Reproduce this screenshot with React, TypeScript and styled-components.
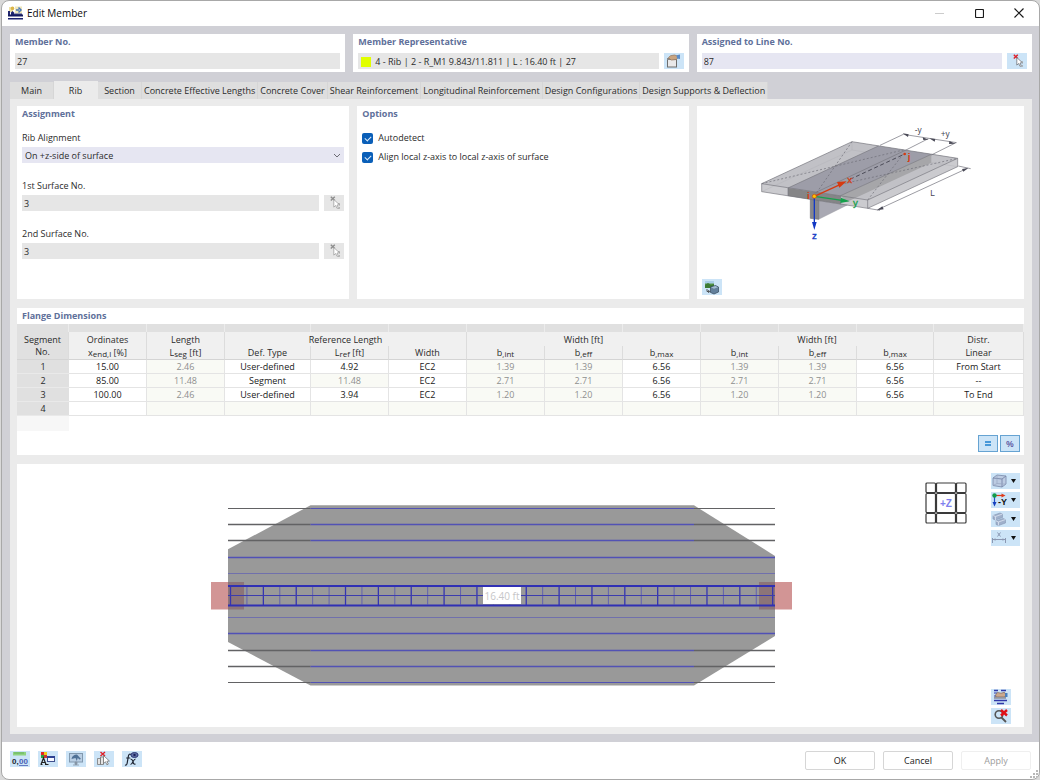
import React from "react";
import styled, { createGlobalStyle } from "styled-components";

const GlobalStyle = createGlobalStyle`
  * { box-sizing: border-box; }
  body {
    margin: 0;
    background: #d9d9d9;
    color: #2b2b2b;
    font-family: "Open Sans", "Noto Sans", sans-serif;
    font-size: 9px;
    line-height: 12px;
  }
  button, input, select { font: inherit; color: inherit; }
`;

/* ---------- window frame ---------- */

const Window = styled.div`
  display: flex;
  flex-direction: column;
  min-height: 100vh;
  margin-left: 1px;
  border: 1px solid #a8a8a8;
  border-radius: 8px;
  background: #ffffff;
  overflow: hidden;
`;

const TitleBar = styled.header`
  display: flex;
  align-items: center;
  height: 25px;
  padding: 0 0 1px 6px;
  gap: 4px;
`;

const WindowTitle = styled.h1`
  flex: 1;
  margin: 0;
  font-size: 10px;
  font-weight: 400;
  color: #0c0c0c;
`;

const WindowButtons = styled.div`
  display: flex;
`;

const WindowButton = styled.button`
  display: flex;
  align-items: center;
  justify-content: center;
  width: 40px;
  height: 24px;
  padding: 0;
  border: 0;
  background: transparent;
`;

const Body = styled.main`
  display: flex;
  flex: 1;
  flex-direction: column;
  padding: 8px 7px 8px 8px;
  background: #d0d0d6;
`;

const HeaderPanels = styled.div`
  display: grid;
  grid-template-columns: repeat(3, 1fr);
  gap: 8px;
  margin-bottom: 9px;
`;

const HeaderPanel = styled.section`
  display: flex;
  flex-direction: column;
  gap: 5px;
  padding: 2px 5px 3px;
  background: #ffffff;
`;

const PanelTitle = styled.h2`
  margin: 0;
  font-size: 9px;
  font-weight: 700;
  line-height: 12px;
  color: #60709a;
`;

const ControlRow = styled.div`
  display: flex;
  gap: 5px;
`;

const TextField = styled.input<{ $editable?: boolean }>`
  flex: 1;
  min-width: 0;
  height: 16px;
  padding: 1px 2px 0;
  border: 0;
  outline: 0;
  background: ${(p) => (p.$editable ? "#e6e6f2" : "#e6e6e6")};
`;

const Representative = styled.div`
  display: flex;
  flex: 1;
  align-items: center;
  gap: 4px;
  height: 16px;
  padding: 1px 3px 0;
  background: #e6e6e6;
`;

const Swatch = styled.span`
  width: 10px;
  height: 10px;
  background: #e1ff00;
`;

const IconButton = styled.button<{ $muted?: boolean; $menu?: boolean }>`
  display: flex;
  flex: none;
  align-items: center;
  justify-content: ${(p) => (p.$menu ? "space-between" : "center")};
  width: ${(p) => (p.$menu ? "29px" : "20px")};
  height: 16px;
  padding: ${(p) => (p.$menu ? "0 4px 0 0" : "0")};
  border: 0;
  background: ${(p) => (p.$muted ? "#e6e6e6" : "#cce4f7")};
`;

/* ---------- tabs ---------- */

const TabList = styled.nav`
  display: flex;
  align-items: flex-end;
  height: 18px;
`;

const Tab = styled.button<{ $active?: boolean }>`
  height: ${(p) => (p.$active ? "18px" : "17px")};
  min-width: 44px;
  padding: 1px 2px 0;
  border: 0;
  border-right: 1px solid ${(p) => (p.$active ? "#ebebeb" : "#d6d6d6")};
  background: ${(p) => (p.$active ? "#ebebeb" : "#dedede")};
  white-space: nowrap;
`;

const TabPage = styled.div`
  display: flex;
  flex: 1;
  flex-direction: column;
  gap: 9px;
  padding: 7px 8px 7px 7px;
  background: #ebebeb;
`;

const TopPanels = styled.div`
  display: grid;
  grid-template-columns: 332fr 331fr 327fr;
  gap: 8px;
`;

const Panel = styled.section`
  display: flex;
  flex-direction: column;
  min-height: 193px;
  padding: 2px 5px 4px;
  background: #ffffff;
`;

const FieldList = styled.div`
  display: flex;
  flex-direction: column;
  gap: 17px;
  padding-top: 12px;
`;

const Field = styled.div`
  display: flex;
  flex-direction: column;
  gap: 3px;
`;

const SelectBox = styled.div`
  position: relative;
  display: flex;

  svg {
    position: absolute;
    top: 6px;
    right: 3px;
    pointer-events: none;
  }
`;

const Select = styled.select`
  width: 100%;
  height: 16px;
  padding: 1px 3px 0;
  border: 0;
  border-radius: 0;
  appearance: none;
  background: #e6e6f2;
`;

const CheckList = styled.div`
  display: flex;
  flex-direction: column;
  gap: 7px;
  padding-top: 12px;
`;

const CheckLabel = styled.label`
  display: flex;
  align-items: center;
  gap: 5px;
`;

const CheckBox = styled.input`
  display: flex;
  justify-content: center;
  width: 11px;
  height: 11px;
  margin: 0;
  border-radius: 2px;
  appearance: none;
  background: #0a5fb8;

  &:checked::after {
    content: "";
    width: 5px;
    height: 3px;
    margin-top: 3px;
    border: solid #dcebfa;
    border-width: 0 0 1px 1px;
    transform: rotate(-45deg);
  }
`;

const PreviewPanel = styled(Panel)`
  justify-content: space-between;
  padding-top: 20px;
`;

const RibFigure = styled.svg`
  align-self: center;
  margin-left: 12px;
`;

/* ---------- flange table ---------- */

const TablePanel = styled.section`
  display: flex;
  flex-direction: column;
  background: #ffffff;

  > h2 { padding: 2px 5px; }
`;

const Table = styled.table`
  width: 100%;
  border-collapse: separate;
  border-spacing: 0;
  table-layout: fixed;
`;

const StripCell = styled.td`
  height: 8px;
  padding: 0;
  border-right: 1px solid #ececec;
  background: #e0e0e0;
`;

const HeadCell = styled.th<{ $bottom?: boolean; $corner?: boolean }>`
  height: 14px;
  padding: 1px 0 0;
  border-right: 1px solid #dcdcdc;
  border-bottom: ${(p) => (p.$bottom ? "1px solid #d4d4d4" : "0")};
  background: ${(p) => (p.$corner ? "#e0e0e0" : "#f0f0f0")};
  font-weight: 400;
  line-height: 12px;

  sub { font-size: 8px; line-height: 8px; vertical-align: -1px; }
`;

const RowHead = styled.th`
  height: 14px;
  padding: 1px 0 0;
  border-bottom: 1px solid #e9e9e9;
  background: #e0e0e0;
  font-weight: 400;
`;

const Cell = styled.td<{ $locked?: boolean }>`
  height: 14px;
  padding: 1px 0 0;
  border-right: 1px solid #e4e4e4;
  border-bottom: 1px solid #e4e4e4;
  background: ${(p) => (p.$locked ? "#f9faf5" : "#ffffff")};
  color: ${(p) => (p.$locked ? "#8f8f8f" : "#202020")};
  text-align: center;
`;

const StubCell = styled.td`
  height: 15px;
  padding: 0;
  background: #f7f7f7;
`;

const TableTools = styled.div`
  display: flex;
  justify-content: flex-end;
  gap: 2px;
  padding: 4px 4px 3px;
`;

const ToggleButton = styled.button`
  display: flex;
  align-items: center;
  justify-content: center;
  width: 20px;
  height: 17px;
  padding: 0;
  border: 1px solid #66a3d2;
  background: #cce4f7;
  color: #5a55a0;
  font-weight: 600;
`;

/* ---------- graphic ---------- */

const Canvas = styled.section`
  position: relative;
  display: flex;
  flex: 1;
  min-height: 263px;
  padding: 9px 4px 3px 0;
  background: #ffffff;
`;

const PlanArea = styled.div`
  display: flex;
  flex: 1;
  align-items: center;
  justify-content: center;
  min-width: 0;
  padding: 0 6px 8px 0;
`;

const ViewCube = styled.svg`
  position: absolute;
  top: 18px;
  right: 57px;
`;

const CanvasTools = styled.div`
  display: flex;
  flex-direction: column;
  gap: 3px;
`;

const Spacer = styled.div`
  flex: 1;
`;

/* ---------- footer ---------- */

const Footer = styled.footer`
  position: relative;
  display: flex;
  align-items: flex-start;
  gap: 8px;
  height: 37px;
  padding: 9px 8px 0;
`;

const PushButton = styled.button`
  width: 70px;
  height: 19px;
  padding: 1px 0 0;
  border: 1px solid #d6d6d6;
  border-radius: 2px;
  background: #ffffff;
  color: #202020;

  &:disabled { border-color: #efefef; color: #9c9c9c; }
`;

const Grip = styled.svg`
  position: absolute;
  right: 1px;
  bottom: 1px;
`;

/* ---------- icons ---------- */

const AppIcon = () => (
  <svg width="15" height="14" viewBox="0 0 15 14" aria-hidden="true">
    <path d="M1 1h4v5H1z" fill="#efe2a4" />
    <circle cx="4.500" cy="2.400" r="1.800" fill="#dcb548" />
    <path d="M0 5h2v4H0z" fill="#23286e" />
    <path d="M3 9V6.500l1.500-1.500 1.500 1.500V9z" fill="#1d2470" />
    <path d="M7 0.500h7v7H7z" fill="#efe7bb" />
    <path d="M8 4h3M10.500 1.500L13 4l-2.500 2.500" fill="none" stroke="#4a78b8" strokeWidth="1.500" />
    <path d="M6 7.500h8v1.500H6z" fill="#39407c" />
    <rect x="0" y="8.500" width="15" height="2" fill="#141a62" />
    <rect x="0" y="12" width="15" height="1.500" fill="#1b2270" />
  </svg>
);

const PickIcon = ({ active }: { active?: boolean }) => (
  <svg width="20" height="16" viewBox="0 0 20 16" aria-hidden="true">
    <path d="M6.800 1.800l4 3.800M10.800 1.800l-4 3.800" stroke={active ? "#e02028" : "#8e8e8e"} strokeWidth="1.400" />
    <path
      d="M9.800 4.500v7.600l1.900-1.600 1.300 2.900 1.300-.6-1.300-2.800 2.400-.3z"
      fill="#ffffff"
      stroke={active ? "#70757c" : "#a0a0a0"}
      strokeWidth=".8"
    />
    <path d="M14 8.500h1.500v2M14 13.500h1.500V12" fill="none" stroke="#9c9c9c" strokeWidth=".7" />
  </svg>
);

const HandWindowIcon = () => (
  <svg width="20" height="16" viewBox="0 0 20 16" aria-hidden="true">
    <rect x="3.500" y="5.500" width="9" height="8.500" fill="#e9e9ea" stroke="#6d6d6d" />
    <path d="M3 5h10v2H3z" fill="#8a8a8a" />
    <path d="M4.500 4.500l2-1.800 4-.7 3 1 .5 1.500-1.500 2-5 .6L5.500 6z" fill="#c9a480" stroke="#86684f" strokeWidth=".6" />
    <path d="M12.500 2.200l3.500-.8V6l-3-.6z" fill="#5a8cc8" />
  </svg>
);

const GalleryIcon = () => (
  <svg width="20" height="16" viewBox="0 0 20 16" aria-hidden="true">
    <rect x="3" y="2" width="9" height="7" fill="#5b9a4c" />
    <path d="M3 2h9v2.500H3z" fill="#a8cde8" />
    <path d="M3 6l3-2 3 2 3-1v4H3z" fill="#3c7b34" />
    <path d="M8.500 8l5-1.500 3 1.500v5l-4.500 2-3.500-1.500z" fill="#63809c" stroke="#33475c" strokeWidth=".7" />
    <path d="M9 8.300l4.500-1.300 2.500 1.200-4 1.600z" fill="#a4bdd4" />
    <path d="M5 10v2.500h2.500M6.200 11l1.500 1.500L6.200 14" fill="none" stroke="#333333" strokeWidth=".8" />
  </svg>
);

const CubeIcon = () => (
  <svg width="16" height="16" viewBox="0 0 16 16" aria-hidden="true">
    <path d="M2 5l4-3 9 1v8l-4 3-9-1.500z" fill="#bccbe2" stroke="#8191b0" strokeWidth=".9" />
    <path d="M2 5l9 1 4-3M11 6v8" fill="none" stroke="#7887a8" strokeWidth=".9" />
    <path d="M6 2v8.500l-4 2M6 10.500l9 .7" fill="none" stroke="#98a6c2" strokeWidth=".7" />
  </svg>
);

const AxesIcon = () => (
  <svg width="16" height="16" viewBox="0 0 16 16" aria-hidden="true">
    <path d="M3.500 4v7" stroke="#2350c8" strokeWidth="1.200" />
    <path d="M1.500 10h4l-2 4.500z" fill="#1540c0" />
    <path d="M4 3.500h7" stroke="#e03a18" strokeWidth="1.200" />
    <path d="M10.500 1.500v4l4-2z" fill="#e03a18" />
    <circle cx="3.500" cy="3.500" r="2.200" fill="#119c4c" />
    <text x="7" y="13" fontSize="9" fontWeight="700" fill="#111111" fontFamily="Liberation Sans, sans-serif">-Y</text>
  </svg>
);

const LayersIcon = () => (
  <svg width="16" height="16" viewBox="0 0 16 16" aria-hidden="true">
    <path d="M2 4.500l7-2.500 2.500 1v3.500L4.500 9 2 8z" fill="#9fb0cb" stroke="#8595b2" strokeWidth=".6" />
    <path d="M2 4.500l2.500 1 7-2.500M4.500 5.500V9" fill="none" stroke="#dde5f2" strokeWidth=".8" />
    <path d="M5 10l7-2.500 2.500 1V12l-7 2.500L5 13.500z" fill="#9fb0cb" stroke="#8595b2" strokeWidth=".6" />
    <path d="M5 10l2.500 1 7-2.500M7.500 11v3.500" fill="none" stroke="#dde5f2" strokeWidth=".8" />
  </svg>
);

const DimensionIcon = () => (
  <svg width="16" height="16" viewBox="0 0 16 16" aria-hidden="true">
    <path d="M1.500 8v5M14.500 8v5M2 9.500h12" fill="none" stroke="#8b98b2" />
    <path d="M2 9.500l2.500-1.300v2.600zM14 9.500l-2.500-1.300v2.600z" fill="#8b98b2" />
    <path d="M6.500 2.500l3 4M9.500 2.500l-3 4" stroke="#8290ac" strokeWidth=".9" />
  </svg>
);

const Caret = () => (
  <svg width="5" height="4" viewBox="0 0 5 4" aria-hidden="true">
    <path d="M0 0h5L2.500 4z" fill="#111111" />
  </svg>
);

const PrintIcon = () => (
  <svg width="20" height="16" viewBox="0 0 20 16" aria-hidden="true">
    <path d="M3 1.500h4M10 1.500h5M3 11.500h13M6 14.500h7" stroke="#3038a8" strokeWidth="1.300" />
    <path d="M3 4h3M3 7h2" stroke="#3038a8" strokeWidth="1.100" />
    <path d="M4.500 6l2-2.500 3.500.7 3.500-.9 1.500 2.700-1 2H5z" fill="#cba98e" stroke="#7a6253" strokeWidth=".7" />
    <path d="M3 8h12v1.800H3z" fill="#9094a0" />
    <path d="M14 4h2.500v4H14z" fill="#4880bf" />
  </svg>
);

const ZoomResetIcon = () => (
  <svg width="20" height="16" viewBox="0 0 20 16" aria-hidden="true">
    <circle cx="8" cy="6.500" r="3.800" fill="none" stroke="#555555" strokeWidth="1.600" />
    <path d="M10.500 9.500l4.500 4.500" stroke="#555555" strokeWidth="1.800" />
    <path d="M10 2l6 5.500M16 2l-6 5.500" stroke="#e01018" strokeWidth="2.400" />
  </svg>
);

const UnitsIcon = () => (
  <svg width="20" height="16" viewBox="0 0 20 16" aria-hidden="true">
    <path d="M3 1h13v3.500H3z" fill="#8fd37f" />
    <path d="M5 1v2M7 1v2M9 1v2M11 1v2M13 1v2" stroke="#4c9c44" strokeWidth=".6" />
    <text x="2" y="13" fontSize="8" fontWeight="700" fill="#23262c" fontFamily="Liberation Sans, sans-serif">0,</text>
    <text x="9" y="13" fontSize="8" fontWeight="700" fill="#4a5eb4" fontFamily="Liberation Sans, sans-serif">00</text>
    <path d="M9 14.500h9" stroke="#4a5eb4" strokeWidth=".8" />
  </svg>
);

const DisplayIcon = () => (
  <svg width="20" height="16" viewBox="0 0 20 16" aria-hidden="true">
    <path d="M3 1h3v3H3z" fill="#e52222" />
    <path d="M6 1h3v3H6z" fill="#f1c916" />
    <path d="M3 4h3v3H3z" fill="#2ea33c" />
    <path d="M6 4h3v3H6z" fill="#c93434" />
    <path d="M3 13.500l2.500-6.500L8 13.500M4 11.500h3M2.500 13.500h2M7 13.500h3.500" fill="none" stroke="#222222" strokeWidth="1.200" />
    <rect x="9.500" y="5.500" width="7" height="5" fill="#f7f8ff" stroke="#40508e" />
    <path d="M9 5h8v2H9z" fill="#2d4192" />
  </svg>
);

const MonitorIcon = () => (
  <svg width="20" height="16" viewBox="0 0 20 16" aria-hidden="true">
    <rect x="3.500" y="2.500" width="13" height="8.500" fill="#b9cee3" stroke="#8198ae" />
    <path d="M5.500 8c.5-3 2.500-4.500 5.500-4.500L15 8l-1.800.4-1.400-1.600-1 3.200-1.300-3z" fill="#4f7196" />
    <path d="M9 11h2v2.500H9zM7 14h6" fill="#8796a6" stroke="#8796a6" strokeWidth=".8" />
  </svg>
);

const SelectObjectIcon = () => (
  <svg width="20" height="16" viewBox="0 0 20 16" aria-hidden="true">
    <path d="M3.500 7.500h3v6h-3zM6.500 6h3v7.500h-3z" fill="#e4e4e4" stroke="#777777" strokeWidth=".8" />
    <path d="M6.500 1l4.500 4M11 1L6.500 5" stroke="#e02028" strokeWidth="1.400" />
    <path d="M9.500 4.500v8l2-1.700 1.400 3 1.400-.7-1.400-2.800 2.500-.3z" fill="#ffffff" stroke="#666666" strokeWidth=".7" />
  </svg>
);

const FormulaIcon = () => (
  <svg width="20" height="16" viewBox="0 0 20 16" aria-hidden="true">
    <path d="M9 3.500c-1.500-1-2.400 0-2.700 2L5.200 12c-.3 1.800-1 2.400-2.200 2M4.200 7h4" fill="none" stroke="#1c2230" strokeWidth="1.200" />
    <path d="M8.500 8c2 0 2 1 2.500 3s1 2.500 2.500 2M13.500 8c-2 0-3 5.500-5 5.500" fill="none" stroke="#1c2230" strokeWidth="1.100" />
    <ellipse cx="12.500" cy="4" rx="3.600" ry="2.500" fill="#6271a6" stroke="#2c3a78" />
    <circle cx="12.500" cy="4" r="1.200" fill="#17205a" />
  </svg>
);

/* ---------- drawings ---------- */

const RibPreview = () => (
  <RibFigure width="212" height="117" viewBox="60 50 636 351" fill="none" role="img" aria-label="Rib axes">
    <path d="M336 97L653 147V172L383 297L65 247V223z" fill="#cbcbcf" />
    <path d="M336 97L653 147L383 272L65 223z" fill="#c1c1c6" />
    <path d="M336 122L653 172" stroke="#a9a9b0" />
    <path d="M336 97V122L65 247" stroke="#acacb2" />
    <path d="M415 110L574 135L302 259L144 236z" fill="#9d9da8" />
    <path d="M574 135V160L320 278L302 259z" fill="#a6a6a9" />
    <path d="M144 236L302 259V285L144 260z" fill="#858587" />
    <path d="M236 274L322 287L236 330z" fill="#a9a9b3" stroke="#8e8e96" />
    <path d="M211 270L236 274V330L211 327z" fill="#87878b" stroke="#6f6f74" strokeWidth="2" />
    <path d="M336 97L653 147L383 272L65 223zM65 223V247L383 297V272M653 147V172L383 297" stroke="#77777e" strokeWidth="2" />
    <path d="M415 110L144 236V260M574 135L302 259V285M498 122L226 250" stroke="#77777f" strokeWidth="2" />
    <path d="M65 223L490 122M336 97L223 260M302 225L653 147M490 134L383 272" stroke="#6d6d76" strokeWidth="2" strokeDasharray="6 6" />
    <path d="M330 210L494 134" stroke="#4b4b57" strokeWidth="3" strokeDasharray="12 8" />

    <g stroke="#6a6a74" strokeWidth="2">
      <path d="M420 108L490 75L650 100M498 122L565 88M574 137L648 100" />
      <path d="M383 297L420 303M655 170L692 178M413 301L682 177" />
    </g>
    <g fill="#4a4a57">
      <path d="M488 72l18 3-2 8zM566 91l-18-7 2 8zM568 87l18 2-2 8zM646 103l-18-8-1 9z" />
      <path d="M411 303l16-12 4 9zM685 176l-19 3 4 8z" />
    </g>
    <g fill="#474756" fontFamily="Liberation Sans, sans-serif" fontSize="25">
      <text x="524" y="71">-y</text>
      <text x="602" y="83">+y</text>
      <text x="571" y="259">L</text>
    </g>

    <path d="M223 261L300 226" stroke="#d63a10" strokeWidth="4" />
    <path d="M320 216l-29 2 7 17z" fill="#d63a10" />
    <path d="M223 261L306 273" stroke="#16a04c" strokeWidth="4" />
    <path d="M329 276l-26-11-2 16z" fill="#16a04c" />
    <path d="M223 261V340" stroke="#1238c4" strokeWidth="4" />
    <path d="M223 362l-7-24h14z" fill="#1238c4" />
    <circle cx="223" cy="261" r="6" fill="#ffc400" stroke="#c84a10" strokeWidth="2" />
    <circle cx="494" cy="134" r="4" fill="#d63a10" />
    <g fontFamily="Liberation Sans, sans-serif" fontSize="29" strokeWidth="1">
      <text x="322" y="222" fill="#d63a10" stroke="#d63a10">x</text>
      <text x="339" y="289" fill="#16a04c" stroke="#16a04c">y</text>
      <text x="216" y="390" fill="#1238c4" stroke="#1238c4">z</text>
      <text x="201" y="270" fill="#d63a10" fontWeight="700">i</text>
      <text x="503" y="153" fill="#d63a10" fontWeight="700">j</text>
    </g>
  </RibFigure>
);

const OUTER_LINES = [508, 524, 540, 650, 666, 682];
const INNER_LINES = [557, 573, 617, 633];
const STRONG_TICKS = [0, 2, 4, 7, 9, 11, 13, 15, 18, 20, 22, 24, 26, 29, 31, 33];
const TICKS = Array.from({ length: 34 }, (_, i) => i);

const PlanView = () => (
  <svg width="581" height="190" viewBox="211 500 581 190" role="img" aria-label="Flange plan view">
    <rect x="211" y="582" width="33" height="27.500" fill="#d29595" />
    <rect x="759" y="582" width="33" height="27.500" fill="#d29595" />
    <path d="M228 549.300L310.500 505.300H694L775 556V636L694 685.600H310.500L228 642z" fill="#999999" />
    {OUTER_LINES.map((y) => (
      <g key={y} strokeWidth={y === 508 || y === 682 ? 1 : 1.400}>
        <path d={`M228 ${y + 0.5}H310.500M694 ${y + 0.5}H775`} stroke="#626264" />
        <path d={`M310.500 ${y + 0.5}H694`} stroke="#5252b4" />
      </g>
    ))}
    {INNER_LINES.map((y) => (
      <path
        key={y}
        d={`M228 ${y + 0.5}H775`}
        stroke={y === 557 || y === 633 ? "#5050b6" : "#7070ac"}
        strokeWidth={y === 557 || y === 633 ? 1.400 : 1}
      />
    ))}
    <rect x="228" y="582" width="16" height="27.500" fill="#7c4650" opacity=".45" />
    <rect x="759" y="582" width="16" height="27.500" fill="#7c4650" opacity=".45" />
    {TICKS.map((i) => {
      const strong = STRONG_TICKS.includes(i);
      return (
        <path
          key={i}
          d={`M${230.500 + i * 16.430} ${strong ? 586 : 587}V${strong ? 605.500 : 604.500}`}
          stroke={strong ? "#3535b0" : "#6262ae"}
          strokeWidth={strong ? 1.300 : 1}
        />
      );
    })}
    <path d="M228 586H775M228 605.400H775" stroke="#3030b4" strokeWidth="2" />
    <path d="M228 595.500H775" stroke="#3c3cae" strokeWidth="1.200" />
    <rect x="483" y="587" width="38" height="17" fill="#ffffff" />
    <text x="502" y="600" textAnchor="middle" fontSize="10" fill="#c6c6c8">16.40 ft</text>
  </svg>
);

const Cube = () => (
  <ViewCube width="42" height="42" viewBox="0 0 42 42" fill="none" role="img" aria-label="View cube">
    <g stroke="#3a3a3a" strokeWidth="1.200">
      <rect x="1" y="1" width="9.500" height="9.500" rx="1" />
      <rect x="11.500" y="1" width="19" height="9.500" rx="1" />
      <rect x="31.500" y="1" width="9.500" height="9.500" rx="1" />
      <rect x="1" y="11.500" width="9.500" height="19" rx="1" />
      <rect x="11.500" y="11.500" width="19" height="19" rx="1" />
      <rect x="31.500" y="11.500" width="9.500" height="19" rx="1" />
      <rect x="1" y="31.500" width="9.500" height="9.500" rx="1" />
      <rect x="11.500" y="31.500" width="19" height="9.500" rx="1" />
      <rect x="31.500" y="31.500" width="9.500" height="9.500" rx="1" />
    </g>
    <text x="21" y="25" textAnchor="middle" fontSize="10" fontWeight="700" fill="#7f7fee" fontFamily="Liberation Sans, sans-serif">+Z</text>
  </ViewCube>
);

/* ---------- data ---------- */

const TABS = [
  "Main",
  "Rib",
  "Section",
  "Concrete Effective Lengths",
  "Concrete Cover",
  "Shear Reinforcement",
  "Longitudinal Reinforcement",
  "Design Configurations",
  "Design Supports & Deflection",
];

const COLUMN_WIDTHS = [52, 78, 78, 86, 78, 78, 78, 78, 78, 78, 78, 77, 90];

type Row = { values: string[]; locked: number[] };

const ROWS: Row[] = [
  { values: ["15.00", "2.46", "User-defined", "4.92", "EC2", "1.39", "1.39", "6.56", "1.39", "1.39", "6.56", "From Start"], locked: [1, 5, 6, 8, 9] },
  { values: ["85.00", "11.48", "Segment", "11.48", "EC2", "2.71", "2.71", "6.56", "2.71", "2.71", "6.56", "--"], locked: [1, 3, 5, 6, 8, 9] },
  { values: ["100.00", "2.46", "User-defined", "3.94", "EC2", "1.20", "1.20", "6.56", "1.20", "1.20", "6.56", "To End"], locked: [1, 5, 6, 8, 9] },
  { values: Array(12).fill(""), locked: [1, 2, 3, 4, 5, 6, 7, 8, 9, 10, 11] },
];

const VIEW_MENUS = [
  { name: "Display mode", icon: <CubeIcon /> },
  { name: "View direction", icon: <AxesIcon /> },
  { name: "Layers", icon: <LayersIcon /> },
  { name: "Dimensions", icon: <DimensionIcon /> },
];

const FOOTER_TOOLS = [
  { name: "Units", icon: <UnitsIcon /> },
  { name: "Display properties", icon: <DisplayIcon /> },
  { name: "View", icon: <MonitorIcon /> },
  { name: "Select object", icon: <SelectObjectIcon /> },
  { name: "Formula", icon: <FormulaIcon /> },
];

const FlangeTable = () => (
  <Table>
    <colgroup>
      {COLUMN_WIDTHS.map((width, i) => (
        <col key={i} width={width} />
      ))}
    </colgroup>
    <thead>
      <tr>
        {COLUMN_WIDTHS.map((_, i) => (
          <StripCell key={i} />
        ))}
      </tr>
      <tr>
        <HeadCell rowSpan={2} $corner $bottom>Segment<br />No.</HeadCell>
        <HeadCell>Ordinates</HeadCell>
        <HeadCell>Length</HeadCell>
        <HeadCell colSpan={3}>Reference Length</HeadCell>
        <HeadCell colSpan={3}>Width [ft]</HeadCell>
        <HeadCell colSpan={3}>Width [ft]</HeadCell>
        <HeadCell>Distr.</HeadCell>
      </tr>
      <tr>
        <HeadCell $bottom>x<sub>end,l</sub> [%]</HeadCell>
        <HeadCell $bottom>L<sub>seg</sub> [ft]</HeadCell>
        <HeadCell $bottom>Def. Type</HeadCell>
        <HeadCell $bottom>L<sub>ref</sub> [ft]</HeadCell>
        <HeadCell $bottom>Width</HeadCell>
        <HeadCell $bottom>b<sub>,int</sub></HeadCell>
        <HeadCell $bottom>b<sub>,eff</sub></HeadCell>
        <HeadCell $bottom>b<sub>,max</sub></HeadCell>
        <HeadCell $bottom>b<sub>,int</sub></HeadCell>
        <HeadCell $bottom>b<sub>,eff</sub></HeadCell>
        <HeadCell $bottom>b<sub>,max</sub></HeadCell>
        <HeadCell $bottom>Linear</HeadCell>
      </tr>
    </thead>
    <tbody>
      {ROWS.map((row, r) => (
        <tr key={r}>
          <RowHead scope="row">{r + 1}</RowHead>
          {row.values.map((value, c) => (
            <Cell key={c} $locked={row.locked.includes(c)}>{value}</Cell>
          ))}
        </tr>
      ))}
      <tr>
        <StubCell />
      </tr>
    </tbody>
  </Table>
);

export default function App() {
  return (
    <>
      <GlobalStyle />
      <Window>
        <TitleBar>
          <AppIcon />
          <WindowTitle>Edit Member</WindowTitle>
          <WindowButtons>
            <WindowButton aria-label="Minimize" disabled>
              <svg width="9" height="9" viewBox="0 0 9 9"><path d="M0 4.500h9" stroke="#cccccc" /></svg>
            </WindowButton>
            <WindowButton aria-label="Maximize">
              <svg width="9" height="9" viewBox="0 0 9 9"><rect x=".5" y=".5" width="8" height="8" rx="1" fill="none" stroke="#1a1a1a" strokeWidth="1.200" /></svg>
            </WindowButton>
            <WindowButton aria-label="Close">
              <svg width="10" height="10" viewBox="0 0 10 10"><path d="M.5.5l9 9M9.500.5l-9 9" stroke="#1a1a1a" strokeWidth="1.200" /></svg>
            </WindowButton>
          </WindowButtons>
        </TitleBar>

        <Body>
          <HeaderPanels>
            <HeaderPanel>
              <PanelTitle as="label" htmlFor="member-no">Member No.</PanelTitle>
              <ControlRow>
                <TextField id="member-no" defaultValue="27" readOnly />
              </ControlRow>
            </HeaderPanel>
            <HeaderPanel>
              <PanelTitle>Member Representative</PanelTitle>
              <ControlRow>
                <Representative>
                  <Swatch />
                  4 - Rib | 2 - R_M1 9.843/11.811 | L : 16.40 ft | 27
                </Representative>
                <IconButton aria-label="Edit representative"><HandWindowIcon /></IconButton>
              </ControlRow>
            </HeaderPanel>
            <HeaderPanel>
              <PanelTitle as="label" htmlFor="line-no">Assigned to Line No.</PanelTitle>
              <ControlRow>
                <TextField id="line-no" defaultValue="87" $editable />
                <IconButton aria-label="Pick line"><PickIcon active /></IconButton>
              </ControlRow>
            </HeaderPanel>
          </HeaderPanels>

          <TabList>
            {TABS.map((tab) => (
              <Tab key={tab} $active={tab === "Rib"}>{tab}</Tab>
            ))}
          </TabList>

          <TabPage>
            <TopPanels>
              <Panel>
                <PanelTitle>Assignment</PanelTitle>
                <FieldList>
                  <Field>
                    <label htmlFor="alignment">Rib Alignment</label>
                    <SelectBox>
                      <Select id="alignment">
                        <option>On +z-side of surface</option>
                      </Select>
                      <svg width="8" height="6" viewBox="0 0 8 6" fill="none">
                        <path d="M1 1l3 3 3-3" stroke="#6c6c74" />
                      </svg>
                    </SelectBox>
                  </Field>
                  <Field>
                    <label htmlFor="surface-1">1st Surface No.</label>
                    <ControlRow>
                      <TextField id="surface-1" defaultValue="3" readOnly />
                      <IconButton aria-label="Pick first surface" $muted><PickIcon /></IconButton>
                    </ControlRow>
                  </Field>
                  <Field>
                    <label htmlFor="surface-2">2nd Surface No.</label>
                    <ControlRow>
                      <TextField id="surface-2" defaultValue="3" readOnly />
                      <IconButton aria-label="Pick second surface" $muted><PickIcon /></IconButton>
                    </ControlRow>
                  </Field>
                </FieldList>
              </Panel>

              <Panel>
                <PanelTitle>Options</PanelTitle>
                <CheckList>
                  <CheckLabel>
                    <CheckBox type="checkbox" defaultChecked />
                    Autodetect
                  </CheckLabel>
                  <CheckLabel>
                    <CheckBox type="checkbox" defaultChecked />
                    Align local z-axis to local z-axis of surface
                  </CheckLabel>
                </CheckList>
              </Panel>

              <PreviewPanel>
                <RibPreview />
                <IconButton aria-label="Show picture"><GalleryIcon /></IconButton>
              </PreviewPanel>
            </TopPanels>

            <TablePanel>
              <PanelTitle>Flange Dimensions</PanelTitle>
              <FlangeTable />
              <TableTools>
                <ToggleButton aria-label="Equal">
                  <svg width="6" height="5" viewBox="0 0 6 5"><path d="M0 1h6M0 4h6" stroke="#1c7fce" strokeWidth="1.500" /></svg>
                </ToggleButton>
                <ToggleButton>%</ToggleButton>
              </TableTools>
            </TablePanel>

            <Canvas>
              <PlanArea>
                <PlanView />
              </PlanArea>
              <Cube />
              <CanvasTools>
                {VIEW_MENUS.map((menu) => (
                  <IconButton key={menu.name} aria-label={menu.name} $menu>
                    {menu.icon}
                    <Caret />
                  </IconButton>
                ))}
                <Spacer />
                <IconButton aria-label="Print"><PrintIcon /></IconButton>
                <IconButton aria-label="Reset zoom"><ZoomResetIcon /></IconButton>
              </CanvasTools>
            </Canvas>
          </TabPage>
        </Body>

        <Footer>
          {FOOTER_TOOLS.map((tool) => (
            <IconButton key={tool.name} aria-label={tool.name}>{tool.icon}</IconButton>
          ))}
          <Spacer />
          <PushButton>OK</PushButton>
          <PushButton>Cancel</PushButton>
          <PushButton disabled>Apply</PushButton>
          <Grip width="8" height="8" viewBox="0 0 8 8" aria-hidden="true">
            <path d="M6 0h2v2H6zM3 3h2v2H3zM6 3h2v2H6zM0 6h2v2H0zM3 6h2v2H3zM6 6h2v2H6z" fill="#b8b8b8" />
          </Grip>
        </Footer>
      </Window>
    </>
  );
}
